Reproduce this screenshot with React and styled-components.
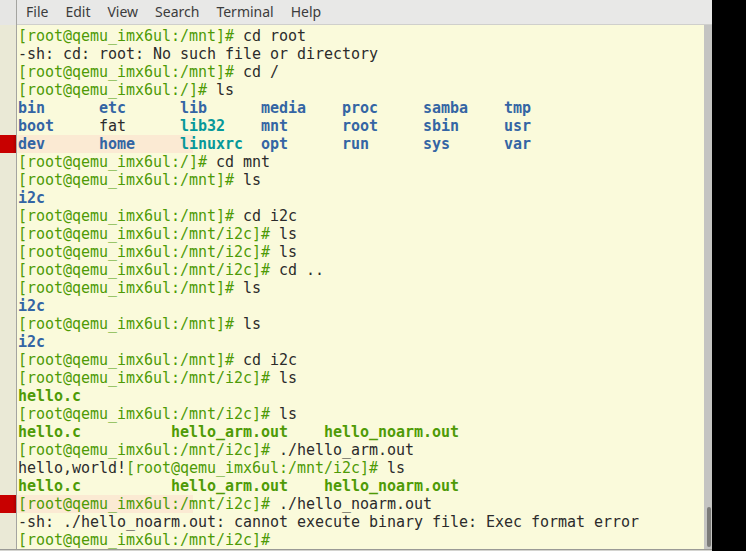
import styled, { createGlobalStyle } from "styled-components";

const GlobalStyle = createGlobalStyle`
  html, body {
    margin: 0;
    padding: 0;
    background: #000;
  }
`;

const Screen = styled.div`
  display: flex;
  width: 746px;
  height: 551px;
  overflow: hidden;
  background: #000;
`;

const Window = styled.div`
  display: flex;
  flex-direction: column;
  width: 712px;
  height: 100%;
  background: #d9d9d6;
`;

const TopRow = styled.div`
  display: flex;
  height: 25px;
  flex-shrink: 0;
`;

const GutterTop = styled.div`
  width: 16px;
  background: #e6e6e4;
  border-right: 1px solid #a4a4a0;
`;

const MenuBar = styled.div`
  flex: 1;
  display: flex;
  align-items: center;
  gap: 17px;
  padding: 0 0 1px 9px;
  background: #e8e8e7;
  border-bottom: 1px solid #cfcfcc;
  font-family: "Noto Sans", "Open Sans", sans-serif;
  font-size: 14px;
  color: #3c3c3c;
`;

const MenuItem = styled.span`
  line-height: 24px;
`;

const Body = styled.div`
  flex: 1;
  display: flex;
  min-height: 0;
`;

const Gutter = styled.div`
  width: 16px;
  padding-top: 2px;
  background: #eae9d6;
  border-right: 1px solid #a4a4a0;
  display: flex;
  flex-direction: column;
`;

const Mark = styled.div`
  height: 18px;
  flex-shrink: 0;
  background: ${(p) => (p.$on ? "linear-gradient(to right, #c80000 80%, #a80000)" : "transparent")};
`;

const Terminal = styled.div`
  flex: 1;
  padding: 2px 0 0 1px;
  background: #fafadb;
  font-family: "DejaVu Sans Mono", "Liberation Mono", monospace;
  font-size: 15px;
  letter-spacing: -0.03px;
  color: #2b2b2b;
  overflow: hidden;
`;

const Row = styled.div`
  height: 18px;
  line-height: 18px;
  white-space: pre;
  margin-left: -1px;
  padding-left: 1px;
  background: ${(p) =>
    p.$hl ? "linear-gradient(to right, #fbead3 176px, transparent 176px)" : "transparent"};
`;

const colors = {
  prompt: "#4e9a06",
  text: "#2b2b2b",
  dir: "#3465a4",
  link: "#06989a",
  exec: "#4e9a06",
};

const Seg = styled.span`
  color: ${(p) => colors[p.$k] || colors.text};
  font-weight: ${(p) => (p.$k === "dir" || p.$k === "link" || p.$k === "exec" ? "bold" : "normal")};
`;

const Scrollbar = styled.div`
  width: 8px;
  background: #c4c4c2;
  display: flex;
  flex-direction: column;
  justify-content: flex-end;
  padding: 0 1px 2px 3px;
  box-sizing: border-box;
`;

const Thumb = styled.div`
  height: 40px;
  border-radius: 2px;
  background: #7b7b79;
`;

const BottomEdge = styled.div`
  height: 1px;
  flex-shrink: 0;
  border-top: 1px solid #9a9a96;
  background: #d4d4d0;
`;

const P = (path, cmd = "") => [
  { t: `[root@qemu_imx6ul:${path}]#`, k: "prompt" },
  { t: cmd ? ` ${cmd}` : "", k: "text" },
];

const cols = (items, w) =>
  items.map(([t, k], i) => ({ t: i < items.length - 1 ? t.padEnd(w) : t, k }));

const lines = [
  { s: P("/mnt", "cd root") },
  { s: [{ t: "-sh: cd: root: No such file or directory", k: "text" }] },
  { s: P("/mnt", "cd /") },
  { s: P("/", "ls") },
  {
    s: cols(
      [["bin", "dir"], ["etc", "dir"], ["lib", "dir"], ["media", "dir"], ["proc", "dir"], ["samba", "dir"], ["tmp", "dir"]],
      9
    ),
  },
  {
    s: cols(
      [["boot", "dir"], ["fat", "text"], ["lib32", "link"], ["mnt", "dir"], ["root", "dir"], ["sbin", "dir"], ["usr", "dir"]],
      9
    ),
  },
  {
    hl: true,
    mark: true,
    s: cols(
      [["dev", "dir"], ["home", "dir"], ["linuxrc", "link"], ["opt", "dir"], ["run", "dir"], ["sys", "dir"], ["var", "dir"]],
      9
    ),
  },
  { s: P("/", "cd mnt") },
  { s: P("/mnt", "ls") },
  { s: [{ t: "i2c", k: "dir" }] },
  { s: P("/mnt", "cd i2c") },
  { s: P("/mnt/i2c", "ls") },
  { s: P("/mnt/i2c", "ls") },
  { s: P("/mnt/i2c", "cd ..") },
  { s: P("/mnt", "ls") },
  { s: [{ t: "i2c", k: "dir" }] },
  { s: P("/mnt", "ls") },
  { s: [{ t: "i2c", k: "dir" }] },
  { s: P("/mnt", "cd i2c") },
  { s: P("/mnt/i2c", "ls") },
  { s: [{ t: "hello.c", k: "exec" }] },
  { s: P("/mnt/i2c", "ls") },
  { s: cols([["hello.c", "exec"], ["hello_arm.out", "exec"], ["hello_noarm.out", "exec"]], 17) },
  { s: P("/mnt/i2c", "./hello_arm.out") },
  { s: [{ t: "hello,world!", k: "text" }, ...P("/mnt/i2c", "ls")] },
  { s: cols([["hello.c", "exec"], ["hello_arm.out", "exec"], ["hello_noarm.out", "exec"]], 17) },
  { hl: true, mark: true, s: P("/mnt/i2c", "./hello_noarm.out") },
  { s: [{ t: "-sh: ./hello_noarm.out: cannot execute binary file: Exec format error", k: "text" }] },
  { s: P("/mnt/i2c") },
];

const menu = ["File", "Edit", "View", "Search", "Terminal", "Help"];

export default function App() {
  return (
    <>
      <GlobalStyle />
      <Screen>
        <Window>
          <TopRow>
            <GutterTop />
            <MenuBar>
              {menu.map((m) => (
                <MenuItem key={m}>{m}</MenuItem>
              ))}
            </MenuBar>
          </TopRow>
          <Body>
            <Gutter>
              {lines.map((l, i) => (
                <Mark key={i} $on={l.mark} />
              ))}
            </Gutter>
            <Terminal>
              {lines.map((l, i) => (
                <Row key={i} $hl={l.hl}>
                  {l.s.map((seg, j) => (
                    <Seg key={j} $k={seg.k}>
                      {seg.t}
                    </Seg>
                  ))}
                </Row>
              ))}
            </Terminal>
            <Scrollbar>
              <Thumb />
            </Scrollbar>
          </Body>
          <BottomEdge />
        </Window>
      </Screen>
    </>
  );
}
